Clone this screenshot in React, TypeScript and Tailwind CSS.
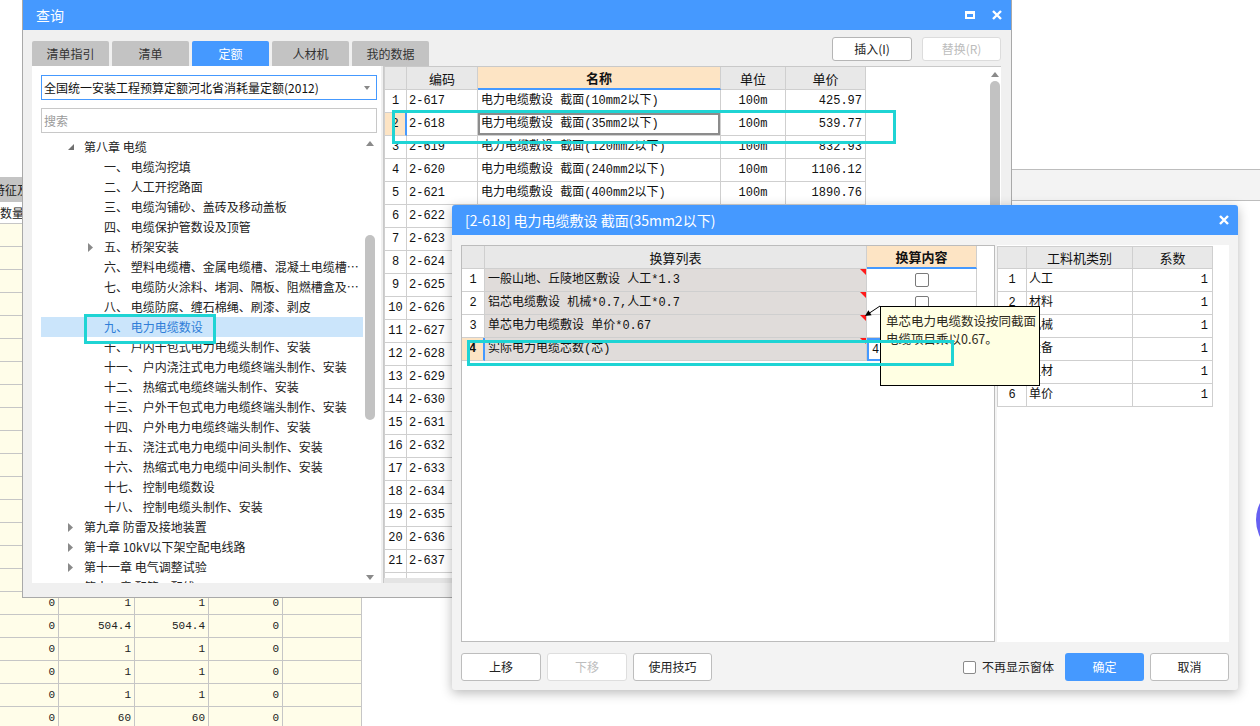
import React from 'react';

const MONO = "font-['Liberation_Mono','Noto_Sans_CJK_SC',monospace]";

function CloseIcon() {
  return (
    <svg width="10" height="10" viewBox="0 0 10 10">
      <path d="M1 1 L9 9 M9 1 L1 9" stroke="white" strokeWidth="2.4" />
    </svg>
  );
}

function OpenArrow() {
  return (
    <svg width="6" height="6" viewBox="0 0 6 6">
      <polygon points="6,0 6,6 0,6" fill="#707070" />
    </svg>
  );
}

function ClosedArrow() {
  return (
    <svg width="5" height="9" viewBox="0 0 5 9">
      <polygon points="0,0 5,4.5 0,9" fill="#8a8a8a" />
    </svg>
  );
}

const bgTail = [
  ['0', '1', '1', '0'],
  ['0', '504.4', '504.4', '0'],
  ['0', '1', '1', '0'],
  ['0', '1', '1', '0'],
  ['0', '1', '1', '0'],
  ['0', '60', '60', '0'],
];
const bgRows = Array.from({ length: 22 }, (_, i) => (i >= 16 ? bgTail[i - 16] : ['0', '1', '1', '0']));
const bgWidths = ['w-[59px]', 'w-[76px]', 'w-[74px]', 'w-[74px]'];

function Background() {
  return (
    <div className="flex h-full">
      <div className="w-[362px] shrink-0 flex flex-col pt-[177px] border-r border-[#c6c6c6]">
        <div className="h-[25px] shrink-0 bg-[#c4c4c4] flex items-center overflow-hidden whitespace-nowrap text-[12px] leading-[16px]">
          <span className="-ml-[7px]">特征及内容</span>
        </div>
        <div className="h-[22px] shrink-0 flex items-center border-b border-[#c6c6c6] overflow-hidden whitespace-nowrap text-[12px] leading-[16px]">
          <span>数量</span>
        </div>
        {bgRows.map((r, i) => (
          <div key={i} className={`flex h-[23px] shrink-0 bg-[#fffde9] border-b border-[#c6c6c6] ${MONO} text-[11px]`}>
            {r.map((v, j) => (
              <div key={j} className={`${bgWidths[j]} border-r border-[#c6c6c6] flex items-center justify-end pr-[3px]`}>
                {v}
              </div>
            ))}
            <div className="flex-1" />
          </div>
        ))}
      </div>
      <div className="flex-1 pt-[169px]">
        <div className="h-[32px] bg-[#f3f3f3] border-y border-[#bdbdbd]" />
      </div>
    </div>
  );
}

type TreeItem = { level: 0 | 1; label: string; num?: string; arrow?: 'open' | 'closed'; selected?: boolean };

const treeItems: TreeItem[] = [
  { level: 0, arrow: 'open', label: '第八章 电缆' },
  { level: 1, num: '一、', label: '电缆沟挖填' },
  { level: 1, num: '二、', label: '人工开挖路面' },
  { level: 1, num: '三、', label: '电缆沟铺砂、盖砖及移动盖板' },
  { level: 1, num: '四、', label: '电缆保护管数设及顶管' },
  { level: 1, num: '五、', label: '桥架安装', arrow: 'closed' },
  { level: 1, num: '六、', label: '塑料电缆槽、金属电缆槽、混凝土电缆槽安装' },
  { level: 1, num: '七、', label: '电缆防火涂料、堵洞、隔板、阻燃槽盒及防火枕安装' },
  { level: 1, num: '八、', label: '电缆防腐、缠石棉绳、刷漆、剥皮' },
  { level: 1, num: '九、', label: '电力电缆数设', selected: true },
  { level: 1, num: '十、', label: '户内干包式电力电缆头制作、安装' },
  { level: 1, num: '十一、', label: '户内浇注式电力电缆终端头制作、安装' },
  { level: 1, num: '十二、', label: '热缩式电缆终端头制作、安装' },
  { level: 1, num: '十三、', label: '户外干包式电力电缆终端头制作、安装' },
  { level: 1, num: '十四、', label: '户外电力电缆终端头制作、安装' },
  { level: 1, num: '十五、', label: '浇注式电力电缆中间头制作、安装' },
  { level: 1, num: '十六、', label: '热缩式电力电缆中间头制作、安装' },
  { level: 1, num: '十七、', label: '控制电缆数设' },
  { level: 1, num: '十八、', label: '控制电缆头制作、安装' },
  { level: 0, arrow: 'closed', label: '第九章 防雷及接地装置' },
  { level: 0, arrow: 'closed', label: '第十章 10kV以下架空配电线路' },
  { level: 0, arrow: 'closed', label: '第十一章 电气调整试验' },
  { level: 0, arrow: 'closed', label: '第十二章 配管、配线' },
];

function LeftPanel() {
  return (
    <div className="w-[349px] shrink-0 bg-white flex flex-col pl-[9px] pr-[4px] pt-[9px] text-[12px]">
      <div className="h-[25px] shrink-0 border border-[#4599ff] flex items-center pl-[2px] pr-[6px]">
        <span className="flex-1 text-[#111]">全国统一安装工程预算定额河北省消耗量定额(2012)</span>
        <svg width="6" height="4" viewBox="0 0 6 4">
          <polygon points="0,0 6,0 3,4" fill="#888" />
        </svg>
      </div>
      <div className="h-[25px] shrink-0 mt-[8px] border border-[#c8c8c8] flex items-center pl-[2px] text-[#9a9a9a]">搜索</div>
      <div className="mt-[4px] flex-1 min-h-0 flex overflow-hidden">
        <div className="flex-1 min-w-0 flex flex-col">
          {treeItems.map((it, i) => (
            <div
              key={i}
              className={`flex items-center h-[20px] shrink-0 whitespace-nowrap ${it.selected ? 'bg-[#cbe5fb] text-[#2f7ed8]' : 'text-[#222]'}`}
            >
              <div className={it.level === 0 ? 'w-[27px] shrink-0' : 'w-[47px] shrink-0'} />
              <div className="w-[16px] shrink-0 flex items-center">
                {it.arrow === 'open' && <OpenArrow />}
                {it.arrow === 'closed' && <ClosedArrow />}
              </div>
              <span className="truncate min-w-0 pr-[4px] leading-[18px]">{it.num ? `${it.num} ${it.label}` : it.label}</span>
            </div>
          ))}
        </div>
        <div className="w-[14px] shrink-0 flex flex-col items-center pt-[4px] pb-[3px]">
          <svg width="8" height="5" viewBox="0 0 8 5">
            <polygon points="0,5 8,5 4,0" fill="#8a8a8a" />
          </svg>
          <div className="mt-[89px] w-[10px] h-[185px] rounded-full bg-[#c2c2c2]" />
          <div className="flex-1" />
          <svg width="8" height="5" viewBox="0 0 8 5">
            <polygon points="0,0 8,0 4,5" fill="#8a8a8a" />
          </svg>
        </div>
      </div>
    </div>
  );
}

const hiddenNames = [
  '铝芯电力电缆敷设 截面(10mm2以下)',
  '铝芯电力电缆敷设 截面(35mm2以下)',
  '铝芯电力电缆敷设 截面(120mm2以下)',
  '铝芯电力电缆敷设 截面(240mm2以下)',
];

const quotaRows = [
  { code: '2-617', name: '电力电缆敷设 截面(10mm2以下)', unit: '100m', price: '425.97' },
  { code: '2-618', name: '电力电缆敷设 截面(35mm2以下)', unit: '100m', price: '539.77' },
  { code: '2-619', name: '电力电缆敷设 截面(120mm2以下)', unit: '100m', price: '832.93' },
  { code: '2-620', name: '电力电缆敷设 截面(240mm2以下)', unit: '100m', price: '1106.12' },
  { code: '2-621', name: '电力电缆敷设 截面(400mm2以下)', unit: '100m', price: '1890.76' },
  ...Array.from({ length: 17 }, (_, i) => ({
    code: `2-${622 + i}`,
    name: hiddenNames[i % 4],
    unit: '100m',
    price: '',
  })),
];

function QuotaGrid() {
  return (
    <div className="flex-1 bg-white border-t border-l border-[#c9c9c9] flex flex-col overflow-hidden">
      <div className="flex-1 min-h-0 flex overflow-hidden">
        <div className={`w-[482px] shrink-0 flex flex-col border-l border-[#cfcfcf] ${MONO} text-[12px] text-[#111]`}>
          <div className="flex h-[23px] shrink-0 font-['Noto_Sans_CJK_SC',sans-serif] text-[13px]">
            <div className="w-[22px] bg-[#e8e8e8] border-r border-b border-[#cfcfcf]" />
            <div className="w-[71px] bg-[#e8e8e8] border-r border-b border-[#cfcfcf] flex items-center justify-center">编码</div>
            <div className="w-[243px] bg-[#fde4c4] border-r border-b-2 border-[#cfcfcf] border-b-[#4599ff] flex items-center justify-center font-bold">名称</div>
            <div className="w-[65px] bg-[#e8e8e8] border-r border-b border-[#cfcfcf] flex items-center justify-center">单位</div>
            <div className="w-[80px] bg-[#e8e8e8] border-r border-b border-[#cfcfcf] flex items-center justify-center">单价</div>
          </div>
          {quotaRows.map((r, i) => {
            const sel = i === 1;
            return (
              <div key={r.code} className="flex h-[23px] shrink-0 whitespace-nowrap">
                <div
                  className={
                    sel
                      ? 'w-[22px] bg-[#fde4c4] border-b border-r-2 border-[#cfcfcf] border-r-[#4599ff] flex items-center justify-center'
                      : 'w-[22px] border-r border-b border-[#cfcfcf] flex items-center justify-center'
                  }
                >
                  {i + 1}
                </div>
                <div className="w-[71px] border-r border-b border-[#cfcfcf] flex items-center pl-[2px]">{r.code}</div>
                <div className="w-[243px] border-r border-b border-[#cfcfcf] overflow-hidden">
                  {sel ? (
                    <div className="h-full border-2 border-[#8c8c8c] flex items-center pl-[1px]">{r.name}</div>
                  ) : (
                    <div className="h-full flex items-center pl-[3px]">{r.name}</div>
                  )}
                </div>
                <div className="w-[65px] border-r border-b border-[#cfcfcf] flex items-center justify-center">{r.unit}</div>
                <div className="w-[80px] border-r border-b border-[#cfcfcf] flex items-center justify-end pr-[3px]">{r.price}</div>
              </div>
            );
          })}
        </div>
        <div className="flex-1" />
        <div className="w-[12px] shrink-0 flex flex-col items-center pt-[5px]">
          <svg width="8" height="5" viewBox="0 0 8 5">
            <polygon points="0,5 8,5 4,0" fill="#8a8a8a" />
          </svg>
          <div className="mt-[4px] w-[10px] h-[180px] rounded-full bg-[#c2c2c2]" />
        </div>
      </div>
      <div className="h-[5px] shrink-0 bg-[#e4e4e4]" />
    </div>
  );
}

const tabs = ['清单指引', '清单', '定额', '人材机', '我的数据'];

function QueryWindow() {
  return (
    <div className="absolute left-[22px] top-0 w-[990px] h-[598px] flex flex-col bg-[#f0f0f0] border border-t-0 border-[#a9a9a9]">
      <div className="h-[30px] shrink-0 bg-[#4599ff] flex items-center pl-[13px] pr-[9px] text-white text-[14px]">
        <span className="flex-1">查询</span>
        <div className="w-[10px] h-[8px] border-2 border-t-[3px] border-white mr-[17px]" />
        <CloseIcon />
      </div>
      <div className="flex-1 min-h-0 flex flex-col pl-[9px] pr-[10px] pb-[14px]">
        <div className="h-[29px] shrink-0 mt-[7px] flex justify-between">
          <div className="flex gap-[3px] self-end">
            {tabs.map((t) => (
              <div
                key={t}
                className={
                  t === '定额'
                    ? 'w-[77px] h-[25px] bg-[#4599ff] text-white text-[12px] flex items-center justify-center rounded-t-[2px]'
                    : 'w-[77px] h-[25px] bg-[#c3c3c3] text-[#333] text-[12px] flex items-center justify-center rounded-t-[2px]'
                }
              >
                {t}
              </div>
            ))}
          </div>
          <div className="flex gap-[10px] self-start text-[12px]">
            <div className="w-[80px] h-[24px] bg-white border border-[#b5b5b5] rounded-[3px] flex items-center justify-center text-[#222]">插入(I)</div>
            <div className="w-[79px] h-[24px] bg-white border border-[#dcdcdc] rounded-[3px] flex items-center justify-center text-[#bcbcbc]">替换(R)</div>
          </div>
        </div>
        <div className="flex-1 min-h-0 flex gap-[2px]">
          <LeftPanel />
          <QuotaGrid />
        </div>
      </div>
    </div>
  );
}

const convRows = [
  { label: '一般山地、丘陵地区敷设 人工*1.3', value: '' },
  { label: '铝芯电缆敷设 机械*0.7,人工*0.7', value: '' },
  { label: '单芯电力电缆敷设 单价*0.67', value: '' },
  { label: '实际电力电缆芯数(芯)', value: '4' },
];

const matRows = ['人工', '材料', '机械', '设备', '主材', '单价'];

function Flag() {
  return <div className="absolute top-0 right-0 w-0 h-0 border-l-[6px] border-l-transparent border-t-[6px] border-t-[#ff1a1a]" />;
}

function Dialog() {
  return (
    <div className="absolute left-[452px] top-[205px] w-[786px] h-[485px] bg-[#f3f3f3] rounded-[3px] shadow-[0_3px_12px_rgba(0,0,0,0.28)] flex flex-col overflow-hidden">
      <div className="h-[30px] shrink-0 bg-[#4599ff] flex items-center pl-[13px] pr-[9px] text-white text-[14px]">
        <span className="flex-1">[2-618] 电力电缆敷设 截面(35mm2以下)</span>
        <CloseIcon />
      </div>
      <div className="flex-1 min-h-0 flex flex-col px-[9px] pt-[10px]">
        <div className="h-[397px] shrink-0 flex gap-[2px]">
          <div className={`w-[534px] shrink-0 bg-white border border-[#bcbcbc] flex flex-col ${MONO} text-[12px] text-[#111]`}>
            <div className="flex h-[23px] shrink-0 font-['Noto_Sans_CJK_SC',sans-serif] text-[13px]">
              <div className="w-[23px] bg-[#e8e8e8] border-r border-b border-[#cfcfcf]" />
              <div className="w-[382px] bg-[#e8e8e8] border-r border-b border-[#cfcfcf] flex items-center justify-center">换算列表</div>
              <div className="w-[110px] bg-[#fde4c4] border-r border-b-2 border-[#cfcfcf] border-b-[#4599ff] flex items-center justify-center font-bold">换算内容</div>
            </div>
            {convRows.map((r, i) => {
              const cur = i === 3;
              return (
                <div key={i} className="flex h-[23px] shrink-0 whitespace-nowrap">
                  <div
                    className={
                      cur
                        ? 'w-[23px] bg-[#fde4c4] border-b border-r-2 border-[#cfcfcf] border-r-[#4599ff] flex items-center justify-center font-bold'
                        : 'w-[23px] border-r border-b border-[#cfcfcf] flex items-center justify-center'
                    }
                  >
                    {i + 1}
                  </div>
                  <div className="relative w-[382px] bg-[#e0dcda] border-r border-b border-[#cfcfcf] flex items-center pl-[3px]">
                    {r.label}
                    <Flag />
                  </div>
                  {cur ? (
                    <div className="w-[110px] border-2 border-[#4599ff] flex items-center pl-[3px]">{r.value}</div>
                  ) : (
                    <div className="w-[110px] border-r border-b border-[#cfcfcf] flex items-center justify-center">
                      <div className="w-[14px] h-[14px] border border-[#7a7a7a] rounded-[2px] bg-white" />
                    </div>
                  )}
                </div>
              );
            })}
          </div>
          <div className="flex-1 bg-white pt-px">
            <div className={`w-[216px] flex flex-col border-t border-l border-[#cfcfcf] ${MONO} text-[12px] text-[#111]`}>
              <div className="flex h-[22px] shrink-0 font-['Noto_Sans_CJK_SC',sans-serif] text-[13px]">
                <div className="w-[29px] bg-[#e8e8e8] border-r border-b border-[#cfcfcf]" />
                <div className="w-[106px] bg-[#e8e8e8] border-r border-b border-[#cfcfcf] flex items-center justify-center">工料机类别</div>
                <div className="w-[80px] bg-[#e8e8e8] border-r border-b border-[#cfcfcf] flex items-center justify-center">系数</div>
              </div>
              {matRows.map((m, i) => (
                <div key={m} className="flex h-[23px] shrink-0">
                  <div className="w-[29px] border-r border-b border-[#cfcfcf] flex items-center justify-center">{i + 1}</div>
                  <div className="w-[106px] border-r border-b border-[#cfcfcf] flex items-center pl-[2px]">{m}</div>
                  <div className="w-[80px] border-r border-b border-[#cfcfcf] flex items-center justify-end pr-[4px]">1</div>
                </div>
              ))}
            </div>
          </div>
        </div>
        <div className="h-[28px] shrink-0 mt-[11px] flex items-center text-[12px]">
          <div className="w-[80px] h-full bg-white border border-[#bdbdbd] rounded-[3px] flex items-center justify-center text-[#222]">上移</div>
          <div className="w-[80px] h-full ml-[6px] bg-white border border-[#dedede] rounded-[3px] flex items-center justify-center text-[#bdbdbd]">下移</div>
          <div className="w-[79px] h-full ml-[6px] bg-white border border-[#bdbdbd] rounded-[3px] flex items-center justify-center text-[#222]">使用技巧</div>
          <div className="flex-1" />
          <div className="w-[13px] h-[13px] border border-[#8a8a8a] rounded-[2px] bg-white" />
          <span className="ml-[6px] text-[#222]">不再显示窗体</span>
          <div className="w-[79px] h-full ml-[11px] bg-[#4599ff] rounded-[3px] flex items-center justify-center text-white">确定</div>
          <div className="w-[79px] h-full ml-[6px] bg-white border border-[#bdbdbd] rounded-[3px] flex items-center justify-center text-[#222]">取消</div>
        </div>
      </div>
    </div>
  );
}

export default function App() {
  return (
    <div className="relative w-[1260px] h-[726px] overflow-hidden bg-white font-['Noto_Sans_CJK_SC',sans-serif] text-[12px] leading-none text-[#222]">
      <Background />
      <QueryWindow />
      <Dialog />

      <div className="absolute left-[880px] top-[306px] w-[160px] h-[80px] bg-[#ffffe3] border border-black pl-[5px] pt-[5px] text-[12.5px] leading-[18px] text-[#2e2a20] whitespace-nowrap">
        单芯电力电缆数设按同截面
        <br />
        电缆项目乘以0.67。
      </div>
      <svg className="absolute left-[860px] top-[300px]" width="24" height="22" viewBox="0 0 24 22">
        <line x1="20" y1="6" x2="8" y2="14" stroke="black" strokeWidth="1" />
        <polygon points="5,16 11.6,15.2 8.4,10.2" fill="black" />
      </svg>

      <div className="absolute left-[84px] top-[314px] w-[132px] h-[30px] border-[3px] border-[#1fd4d4]" />
      <div className="absolute left-[392px] top-[110px] w-[504px] h-[34px] border-[3px] border-[#1fd4d4]" />
      <div className="absolute left-[467px] top-[340px] w-[487px] h-[26px] border-[3px] border-[#1fd4d4]" />

      <div className="absolute left-[1256px] top-[482px] w-[76px] h-[76px] rounded-full bg-[#6660f2]" />
    </div>
  );
}
